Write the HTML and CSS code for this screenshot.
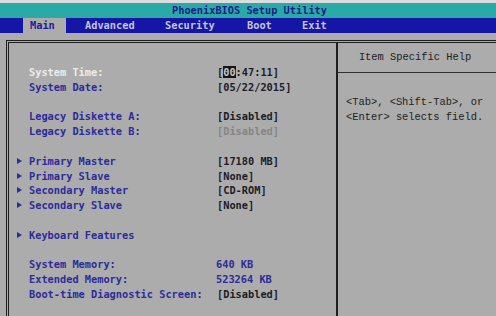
FILE: index.html
```html
<!DOCTYPE html>
<html lang="en">
<head>
    <meta charset="UTF-8">
    <meta name="viewport" content="width=device-width, initial-scale=1.0">
    <title>PhoenixBIOS Setup Utility</title>
    <link rel="stylesheet" href="styles.css">
</head>
<body>

    <div class="top-line"></div>
    <header class="title-bar">PhoenixBIOS Setup Utility</header>

    <nav class="menu-bar">
        <div class="menu-cell"><span class="menu-item active">Main</span></div>
        <div class="menu-cell"><span class="menu-item">Advanced</span></div>
        <div class="menu-cell"><span class="menu-item">Security</span></div>
        <div class="menu-cell"><span class="menu-item">Boot</span></div>
        <div class="menu-cell"><span class="menu-item">Exit</span></div>
    </nav>

    <div class="panel">
        <div class="settings">
            <div class="row">
                <span></span>
                <span class="label selected">System Time:</span>
                <span class="value">[<span class="cursor">00</span>:47:11]</span>
            </div>
            <div class="row">
                <span></span>
                <span class="label">System Date:</span>
                <span class="value">[05/22/2015]</span>
            </div>
            <div class="spacer"></div>

            <div class="row">
                <span></span>
                <span class="label">Legacy Diskette A:</span>
                <span class="value">[Disabled]</span>
            </div>
            <div class="row">
                <span></span>
                <span class="label">Legacy Diskette B:</span>
                <span class="value disabled">[Disabled]</span>
            </div>
            <div class="spacer"></div>

            <!-- Submenus -->
            <div class="row">
                <span class="arrow"></span>
                <span class="label">Primary Master</span>
                <span class="value">[17180 MB]</span>
            </div>
            <div class="row">
                <span class="arrow"></span>
                <span class="label">Primary Slave</span>
                <span class="value">[None]</span>
            </div>
            <div class="row">
                <span class="arrow"></span>
                <span class="label">Secondary Master</span>
                <span class="value">[CD-ROM]</span>
            </div>
            <div class="row">
                <span class="arrow"></span>
                <span class="label">Secondary Slave</span>
                <span class="value">[None]</span>
            </div>
            <div class="spacer"></div>

            <div class="row">
                <span class="arrow"></span>
                <span class="label">Keyboard Features</span>
                <span></span>
            </div>
            <div class="spacer"></div>

            <div class="row">
                <span></span>
                <span class="label">System Memory:</span>
                <span class="value info">640 KB</span>
            </div>
            <div class="row">
                <span></span>
                <span class="label">Extended Memory:</span>
                <span class="value info">523264 KB</span>
            </div>
            <div class="row">
                <span></span>
                <span class="label wide">Boot-time Diagnostic Screen:</span>
                <span class="value">[Disabled]</span>
            </div>
        </div>

        <aside class="help">
            <div class="help-title">Item Specific Help</div>
            <p class="help-text">&lt;Tab&gt;, &lt;Shift-Tab&gt;, or<br>&lt;Enter&gt; selects field.</p>
        </aside>
    </div>

</body>
</html>
```

FILE: styles.css
```css
body {
    font-family: 'DejaVu Sans Mono', 'Liberation Mono', monospace;
    font-size: 10.3px;
    font-weight: bold;
    margin: 0;
    padding: 0;
    width: 496px;
    height: 316px;
    overflow: hidden;
    display: flex;
    flex-direction: column;
    background-color: #acacac;
}

.top-line {
    height: 3px;
    background-color: #dcdcdc;
}

.title-bar {
    height: 15px;
    line-height: 15px;
    text-align: center;
    color: #1c1c8c;
    background-color: #2aaaa6;
    padding-left: 3px;
}

.menu-bar {
    height: 15px;
    line-height: 15px;
    display: grid;
    grid-template-columns: 55px 80px 82px 55px 1fr;
    padding-left: 23px;
    background-color: #1515a6;
}

.menu-item {
    display: block;
    padding-left: 7px;
    color: #c4c4d4;
}

.menu-item.active {
    width: 36px;
    color: #1c1c9c;
    background-color: #acacac;
}

.panel {
    flex: 1;
    display: flex;
    margin-top: 7px;
    margin-left: 6px;
    border-top: 3px double #1e1e1e;
    border-left: 3px double #1e1e1e;
}

.settings {
    width: 327px;
    padding-top: 22px;
}

.row {
    display: grid;
    grid-template-columns: 20px 187px 1fr;
    height: 14.8px;
    line-height: 14.8px;
    white-space: nowrap;
}

.spacer {
    height: 14.8px;
}

.arrow {
    margin-left: 8px;
    margin-top: 4px;
    width: 0;
    height: 0;
    border-left: 5px solid #2b2b9c;
    border-top: 3.5px solid transparent;
    border-bottom: 3.5px solid transparent;
}

.label {
    color: #2b2b9c;
}

.label.selected {
    color: #ececec;
}

.value {
    color: #1c1c28;
    padding-left: 1px;
}

.value.info {
    color: #2b2b9c;
    padding-left: 0;
}

.value.disabled {
    color: #858585;
}

.cursor {
    color: #c8c8c8;
    background-color: #161616;
}

.help {
    flex: 1;
    border-left: 2px solid #1e1e1e;
    color: #222;
    font-family: 'Liberation Mono', monospace;
    font-size: 10.4px;
    font-weight: normal;
}

.help-title {
    height: 29px;
    line-height: 28px;
    text-align: center;
    border-bottom: 1px solid #303030;
    padding-right: 4px;
}

.help-text {
    margin: 22px 0 0 8px;
    line-height: 15px;
    white-space: nowrap;
}
```
